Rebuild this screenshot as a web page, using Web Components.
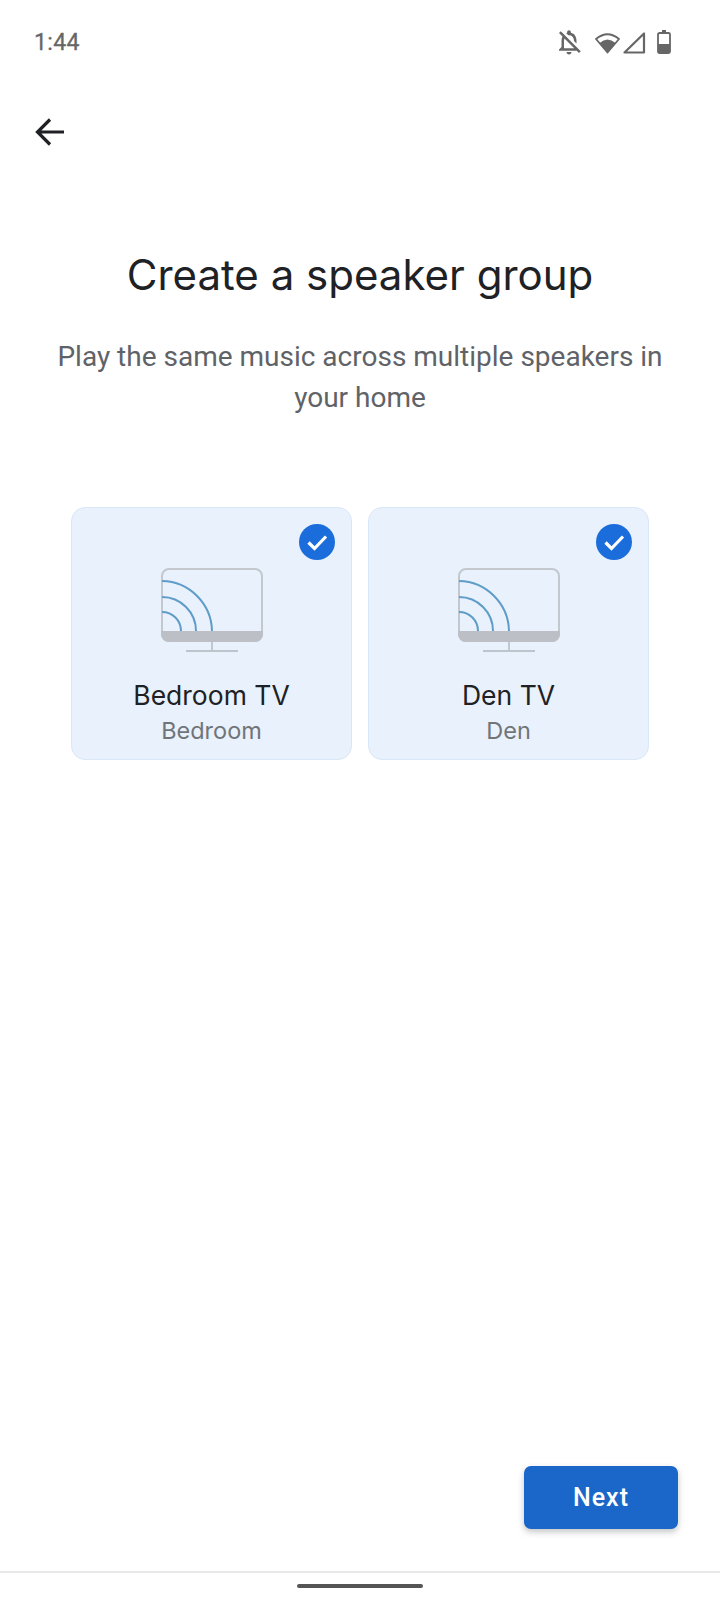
<!DOCTYPE html>
<html lang="en">
<head>
<meta charset="utf-8">
<title>Create a speaker group</title>
<style>
    html, body { margin: 0; background: #fff; }
    body { font-family: Roboto, "Liberation Sans", sans-serif; }
    group-screen { height: 1599px; }
</style>
</head>
<body>
<group-screen>
    <span slot="title">Create a speaker group</span>
    <span slot="subtitle">Play the same music across multiple speakers in your home</span>
    <speaker-card name="Bedroom TV" room="Bedroom"></speaker-card>
    <speaker-card name="Den TV" room="Den"></speaker-card>
    <next-button slot="action">Next</next-button>
</group-screen>

<script>
class StatusBar extends HTMLElement {
    constructor() {
        super();
        this.attachShadow({ mode: "open" });
        this.shadowRoot.innerHTML = `
            <style>
                :host {
                    display: flex;
                    align-items: center;
                    justify-content: space-between;
                    box-sizing: border-box;
                    height: 84px;
                    padding: 0 49px 0 34px;
                    color: #666;
                }
                .time {
                    font: 400 23px Roboto, sans-serif;
                    letter-spacing: .4px;
                    -webkit-text-stroke: .3px #666;
                }
                .icons {
                    display: flex;
                    align-items: center;
                }
                svg { display: block; fill: #666; }
            </style>
            <span class="time">1:44</span>
            <div class="icons">
                <svg width="30" height="30" viewBox="0 0 24 24" style="margin-right:11px"><path d="M12 22c1.100 0 2-.9 2-2h-4c0 1.100.9 2 2 2zm0-15.500c2.490 0 4 2.020 4 4.500v.1l2 2V11c0-3.080-1.640-5.640-4.500-6.320V4c0-.83-.67-1.500-1.500-1.500s-1.500.67-1.500 1.500v.68c-.24.06-.47.15-.69.23l1.640 1.640c.18-.02.36-.05.55-.05zM5.410 3.350L4 4.760l2.810 2.810C6.290 8.570 6 9.740 6 11v5l-2 2v1h14.240l1.740 1.740 1.410-1.410L5.410 3.350zM16 17H8v-6c0-.68.12-1.320.34-1.900L16 16.760V17z"/></svg>
                <svg width="25" height="23" viewBox="0 0 25 23" style="margin-right:2px">
                    <path d="M12.500 21.500L1 8Q12.500-1.500 24 8Z" fill="none" stroke="#666" stroke-width="1.800" stroke-linejoin="round"/>
                    <path d="M12.500 22L4.500 12Q12.500 5 20.500 12Z"/>
                </svg>
                <svg width="24" height="23" viewBox="0 0 24 23" style="margin-right:11px">
                    <path d="M2.500 21.500L22 2.500V21.500Z" fill="none" stroke="#666" stroke-width="2.200" stroke-linejoin="round"/>
                </svg>
                <svg width="14" height="24" viewBox="0 0 14 24">
                    <path d="M5 0h4v2H5z"/>
                    <rect x="1" y="3" width="12" height="20" rx="1.500" fill="none" stroke="#666" stroke-width="1.800"/>
                    <rect x="1" y="14" width="12" height="9" rx="1"/>
                </svg>
            </div>
        `;
    }
}

class BackButton extends HTMLElement {
    constructor() {
        super();
        this.attachShadow({ mode: "open" });
        this.shadowRoot.innerHTML = `
            <style>
                :host {
                    display: block;
                    height: 35px;
                    padding: 33px 0 0 35px;
                }
                svg { display: block; }
            </style>
            <svg width="30" height="30" viewBox="0 0 30 30" aria-label="Back">
                <path d="M29 15H3M15 2.500L2.500 15 15 27.500" fill="none" stroke="#202124" stroke-width="3.200"/>
            </svg>
        `;
    }
}

const cardTemplate = document.createElement("template");

cardTemplate.innerHTML = `
    <style>
        :host {
            display: flex;
            flex-direction: column;
            align-items: center;
            position: relative;
            box-sizing: border-box;
            height: 253px;
            padding-top: 60px;
            background: #e8f1fc;
            border: 1px solid #dae7f7;
            border-radius: 14px;
        }
        .check {
            position: absolute;
            top: 16px;
            right: 16px;
            display: block;
        }
        .tv { display: block; }
        .name {
            margin-top: 25px;
            font: 400 26.500px/36px Inter, Roboto, sans-serif;
            color: #202124;
        }
        .room {
            margin-top: 2px;
            font: 400 23.500px/32px Inter, Roboto, sans-serif;
            color: #70757a;
        }
    </style>
    <svg class="check" width="36" height="36" viewBox="0 0 36 36">
        <circle cx="18" cy="18" r="18" fill="#1a6ddb"/>
        <path d="M9.500 18.500l6 6 11.500-12" fill="none" stroke="#fff" stroke-width="3.200"/>
    </svg>
    <svg class="tv" width="102" height="84" viewBox="0 0 102 84">
        <rect x="1" y="1" width="100" height="72" rx="7" fill="none" stroke="#c3c8cf" stroke-width="2"/>
        <path d="M0 63h102v3a8 8 0 0 1-8 8H8a8 8 0 0 1-8-8z" fill="#bcc0c6"/>
        <path d="M1 13A51 51 0 0 1 51 63M1 29A34 34 0 0 1 35 63M1 44A19 19 0 0 1 20 63" fill="none" stroke="#5f9cc8" stroke-width="2"/>
        <path d="M51 74v9M25 83h52" fill="none" stroke="#bcc4cc" stroke-width="1.800"/>
    </svg>
    <span class="name"></span>
    <span class="room"></span>
`;

class SpeakerCard extends HTMLElement {
    constructor() {
        super();
        this.attachShadow({ mode: "open" });
        this.shadowRoot.appendChild(cardTemplate.content.cloneNode(true));
    }

    connectedCallback() {
        this.shadowRoot.querySelector(".name").textContent = this.getAttribute("name");
        this.shadowRoot.querySelector(".room").textContent = this.getAttribute("room");
    }
}

class NextButton extends HTMLElement {
    constructor() {
        super();
        this.attachShadow({ mode: "open" });
        this.shadowRoot.innerHTML = `
            <style>
                :host {
                    display: flex;
                    align-items: center;
                    justify-content: center;
                    width: 154px;
                    height: 63px;
                    background: #1a66c9;
                    border-radius: 7px;
                    box-shadow: 0 3px 6px rgba(60, 64, 67, 0.3);
                    color: #fff;
                    font: 500 25px Roboto, sans-serif;
                    letter-spacing: 1px;
                }
            </style>
            <slot></slot>
        `;
    }
}

class NavBar extends HTMLElement {
    constructor() {
        super();
        this.attachShadow({ mode: "open" });
        this.shadowRoot.innerHTML = `
            <style>
                :host {
                    display: flex;
                    justify-content: center;
                    box-sizing: border-box;
                    height: 28px;
                    padding: 11px 1px 0 0;
                    border-top: 2px solid #e8e8e8;
                }
                .handle {
                    width: 126px;
                    height: 4px;
                    background: #555;
                    border-radius: 2px;
                }
            </style>
            <div class="handle"></div>
        `;
    }
}

class GroupScreen extends HTMLElement {
    constructor() {
        super();
        this.attachShadow({ mode: "open" });
        this.shadowRoot.innerHTML = `
            <style>
                :host {
                    display: flex;
                    flex-direction: column;
                    box-sizing: border-box;
                    width: 720px;
                }
                header {
                    padding: 0 50px;
                    text-align: center;
                }
                h1 {
                    margin: 93px 0 0;
                    font: 400 42px/60px Inter, Roboto, sans-serif;
                    color: #202124;
                }
                p {
                    margin: 31px 0 0;
                    font: 400 28px/41px Roboto, sans-serif;
                    color: #5f6368;
                }
                .cards {
                    display: grid;
                    grid-template-columns: 281px 281px;
                    gap: 16px;
                    justify-content: center;
                    margin-top: 89px;
                }
                .grow { flex: 1; }
                .actions {
                    display: flex;
                    justify-content: flex-end;
                    padding: 0 42px 42px 0;
                }
            </style>
            <status-bar></status-bar>
            <back-button></back-button>
            <header>
                <h1><slot name="title"></slot></h1>
                <p><slot name="subtitle"></slot></p>
            </header>
            <div class="cards"><slot></slot></div>
            <div class="grow"></div>
            <div class="actions"><slot name="action"></slot></div>
            <nav-bar></nav-bar>
        `;
    }
}

customElements.define("status-bar", StatusBar);
customElements.define("back-button", BackButton);
customElements.define("speaker-card", SpeakerCard);
customElements.define("next-button", NextButton);
customElements.define("nav-bar", NavBar);
customElements.define("group-screen", GroupScreen);
</script>
</body>
</html>
